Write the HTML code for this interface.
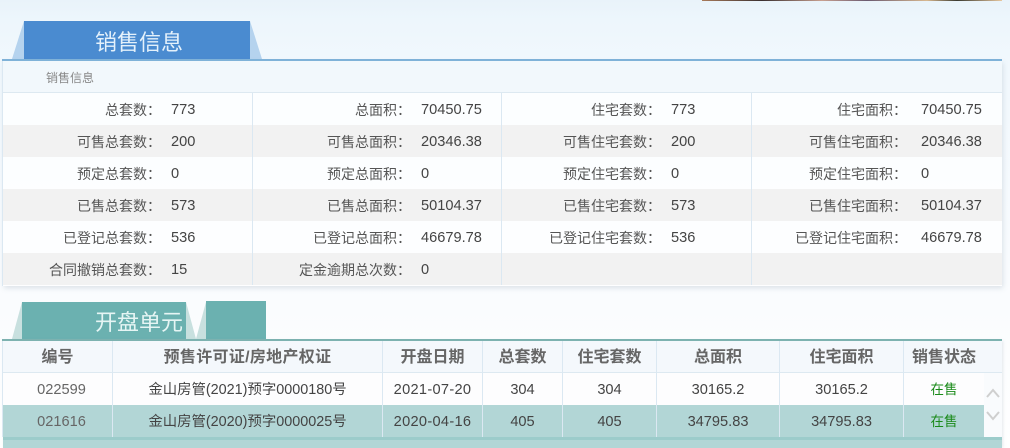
<!DOCTYPE html>
<html><head><meta charset="utf-8"><style>
html,body{margin:0;padding:0}
body{width:1010px;height:448px;overflow:hidden;position:relative;background:linear-gradient(180deg,#e9f3fa 0,#edf6fc 20px,#f1f8fd 60px,#fafcfe 300px,#fff 448px);font-family:"Liberation Sans","Noto Sans CJK SC",sans-serif;font-size:14px;color:#444}
div{position:absolute;box-sizing:border-box}
.r{left:3px;width:999px;height:32px}
.l,.v,.c{white-space:nowrap;line-height:34px;height:32px}
.l{text-align:right;color:#555;font-size:14px}
.v{color:#444;font-size:14.6px}
.c{text-align:center;font-size:14.6px;color:#444}
.h{text-align:center;font-size:16px;font-weight:bold;color:#666;white-space:nowrap;line-height:33px;height:32px;top:341px}
.vl{width:1px;background:#dbe8f2}
</style></head><body>
<div style="left:702px;top:0;width:300px;height:1px;background:linear-gradient(90deg,#a87a5a,#3a3030 20%,#c8a090 40%,#6a5a70 55%,#d8b890 75%,#3a3a30 85%,#e8c8a0)"></div>

<svg style="position:absolute;left:0;top:0" width="1010" height="345">
<polygon points="12,59 24,21 24,59" fill="#b5d3ee"/>
<polygon points="250,21 262,59 250,59" fill="#b5d3ee"/>
<polygon points="12,339 22,302 22,339" fill="#c8e0df"/>
<polygon points="186,302 196,339 186,339" fill="#c8e0df"/>
<polygon points="196,339 206,302 206,339" fill="#c8e0df"/>
</svg>
<div style="left:24px;top:21px;width:226px;height:38px;background:#4a8bd0"></div>
<div style="left:26px;top:21px;width:226px;height:38px;line-height:43px;text-align:center;font-size:22px;color:#e4f1fb;white-space:nowrap;letter-spacing:0">销售信息</div>

<div style="left:3px;top:61px;width:999px;height:225px;background:rgba(255,255,255,.72);box-shadow:1px 2px 5px rgba(150,165,180,.3)"></div>
<div style="left:2px;top:59px;width:1000px;height:2px;background:#7fb2d8"></div>
<div style="left:3px;top:61px;width:999px;height:32px;background:#f2f8fc;border-bottom:1px solid #dde9f1"></div>
<div style="left:46px;top:61px;height:31px;line-height:34px;font-size:12px;color:#888;white-space:nowrap">销售信息</div>

<div class="r" style="top:125px;background:#f2f2f2"></div>
<div class="r" style="top:189px;background:#f2f2f2"></div>
<div class="r" style="top:253px;background:#f2f2f2"></div>
<div class="vl" style="left:2px;top:61px;height:225px"></div>
<div class="vl" style="left:252px;top:93px;height:192px"></div>
<div class="vl" style="left:501px;top:93px;height:192px"></div>
<div class="vl" style="left:751px;top:93px;height:192px"></div>

<div class="l" style="top:93px;left:2px;width:159px">总套数：</div><div class="v" style="top:93px;left:171px">773</div>
<div class="l" style="top:93px;left:252px;width:159px">总面积：</div><div class="v" style="top:93px;left:421px">70450.75</div>
<div class="l" style="top:93px;left:502px;width:159px">住宅套数：</div><div class="v" style="top:93px;left:671px">773</div>
<div class="l" style="top:93px;left:752px;width:155px">住宅面积：</div><div class="v" style="top:93px;left:921px">70450.75</div>

<div class="l" style="top:125px;left:2px;width:159px">可售总套数：</div><div class="v" style="top:125px;left:171px">200</div>
<div class="l" style="top:125px;left:252px;width:159px">可售总面积：</div><div class="v" style="top:125px;left:421px">20346.38</div>
<div class="l" style="top:125px;left:502px;width:159px">可售住宅套数：</div><div class="v" style="top:125px;left:671px">200</div>
<div class="l" style="top:125px;left:752px;width:155px">可售住宅面积：</div><div class="v" style="top:125px;left:921px">20346.38</div>

<div class="l" style="top:157px;left:2px;width:159px">预定总套数：</div><div class="v" style="top:157px;left:171px">0</div>
<div class="l" style="top:157px;left:252px;width:159px">预定总面积：</div><div class="v" style="top:157px;left:421px">0</div>
<div class="l" style="top:157px;left:502px;width:159px">预定住宅套数：</div><div class="v" style="top:157px;left:671px">0</div>
<div class="l" style="top:157px;left:752px;width:155px">预定住宅面积：</div><div class="v" style="top:157px;left:921px">0</div>

<div class="l" style="top:189px;left:2px;width:159px">已售总套数：</div><div class="v" style="top:189px;left:171px">573</div>
<div class="l" style="top:189px;left:252px;width:159px">已售总面积：</div><div class="v" style="top:189px;left:421px">50104.37</div>
<div class="l" style="top:189px;left:502px;width:159px">已售住宅套数：</div><div class="v" style="top:189px;left:671px">573</div>
<div class="l" style="top:189px;left:752px;width:155px">已售住宅面积：</div><div class="v" style="top:189px;left:921px">50104.37</div>

<div class="l" style="top:221px;left:2px;width:159px">已登记总套数：</div><div class="v" style="top:221px;left:171px">536</div>
<div class="l" style="top:221px;left:252px;width:159px">已登记总面积：</div><div class="v" style="top:221px;left:421px">46679.78</div>
<div class="l" style="top:221px;left:502px;width:159px">已登记住宅套数：</div><div class="v" style="top:221px;left:671px">536</div>
<div class="l" style="top:221px;left:752px;width:155px">已登记住宅面积：</div><div class="v" style="top:221px;left:921px">46679.78</div>

<div class="l" style="top:253px;left:2px;width:159px">合同撤销总套数：</div><div class="v" style="top:253px;left:171px">15</div>
<div class="l" style="top:253px;left:252px;width:159px">定金逾期总次数：</div><div class="v" style="top:253px;left:421px">0</div>

<div style="left:22px;top:302px;width:164px;height:37px;background:#6bb1b0"></div>
<div style="left:206px;top:301px;width:60px;height:38px;background:#6bb1b0"></div>
<div style="left:22px;top:302px;width:164px;height:37px;line-height:41px;text-align:right;padding-right:3px;font-size:22px;color:#e6f5f4;white-space:nowrap">开盘单元</div>

<div style="left:3px;top:341px;width:999px;height:107px;background:#f9fbfd;box-shadow:1px 0 3px rgba(150,165,180,.25)"></div>
<div style="left:3px;top:373px;width:981px;height:32px;background:#fdfdfe"></div>
<div style="left:3px;top:341px;width:999px;height:32px;background:#f4f8fc;border-bottom:1px solid #dde9f1"></div>
<div style="left:2px;top:339px;width:1000px;height:2px;background:#7db2b0"></div>
<div style="left:3px;top:405px;width:981px;height:32px;background:#b2d6d6"></div>
<div style="left:3px;top:437px;width:999px;height:3px;background:#9ccccb"></div>
<div style="left:3px;top:440px;width:999px;height:8px;background:#b2d6d6"></div>

<div class="vl" style="left:2px;top:341px;height:96px"></div>
<div class="vl" style="left:112px;top:341px;height:96px"></div>
<div class="vl" style="left:382px;top:341px;height:96px"></div>
<div class="vl" style="left:482px;top:341px;height:96px"></div>
<div class="vl" style="left:562px;top:341px;height:96px"></div>
<div class="vl" style="left:656px;top:341px;height:96px"></div>
<div class="vl" style="left:779px;top:341px;height:96px"></div>
<div class="vl" style="left:903px;top:341px;height:96px"></div>

<div class="h" style="left:3px;width:109px">编号</div>
<div class="h" style="left:113px;width:269px;letter-spacing:.3px">预售许可证/房地产权证</div>
<div class="h" style="left:383px;width:99px">开盘日期</div>
<div class="h" style="left:483px;width:79px">总套数</div>
<div class="h" style="left:563px;width:93px">住宅套数</div>
<div class="h" style="left:657px;width:122px">总面积</div>
<div class="h" style="left:780px;width:123px">住宅面积</div>
<div class="h" style="left:904px;width:80px">销售状态</div>

<div class="c" style="top:373px;left:7px;width:109px;color:#666">022599</div>
<div class="c" style="top:373px;left:113px;width:269px;font-size:14.4px">金山房管(2021)预字0000180号</div>
<div class="c" style="top:373px;left:383px;width:99px;letter-spacing:.3px">2021-07-20</div>
<div class="c" style="top:373px;left:483px;width:79px">304</div>
<div class="c" style="top:373px;left:563px;width:93px">304</div>
<div class="c" style="top:373px;left:657px;width:122px">30165.2</div>
<div class="c" style="top:373px;left:780px;width:123px">30165.2</div>
<div class="c" style="top:373px;left:904px;width:80px;color:#1a8a1a;font-size:13.5px">在售</div>

<div class="c" style="top:405px;left:7px;width:109px;color:#666">021616</div>
<div class="c" style="top:405px;left:113px;width:269px;font-size:14.4px">金山房管(2020)预字0000025号</div>
<div class="c" style="top:405px;left:383px;width:99px;letter-spacing:.3px">2020-04-16</div>
<div class="c" style="top:405px;left:483px;width:79px">405</div>
<div class="c" style="top:405px;left:563px;width:93px">405</div>
<div class="c" style="top:405px;left:657px;width:122px">34795.83</div>
<div class="c" style="top:405px;left:780px;width:123px">34795.83</div>
<div class="c" style="top:405px;left:904px;width:80px;color:#1a8a1a;font-size:13.5px">在售</div>

<svg style="position:absolute;left:984px;top:384px" width="18" height="42" fill="none" stroke="#cfcfcf" stroke-width="2">
<path d="M3 13 L9 6 L15 13"/>
<path d="M3 28 L9 35 L15 28"/>
</svg>
</body></html>
